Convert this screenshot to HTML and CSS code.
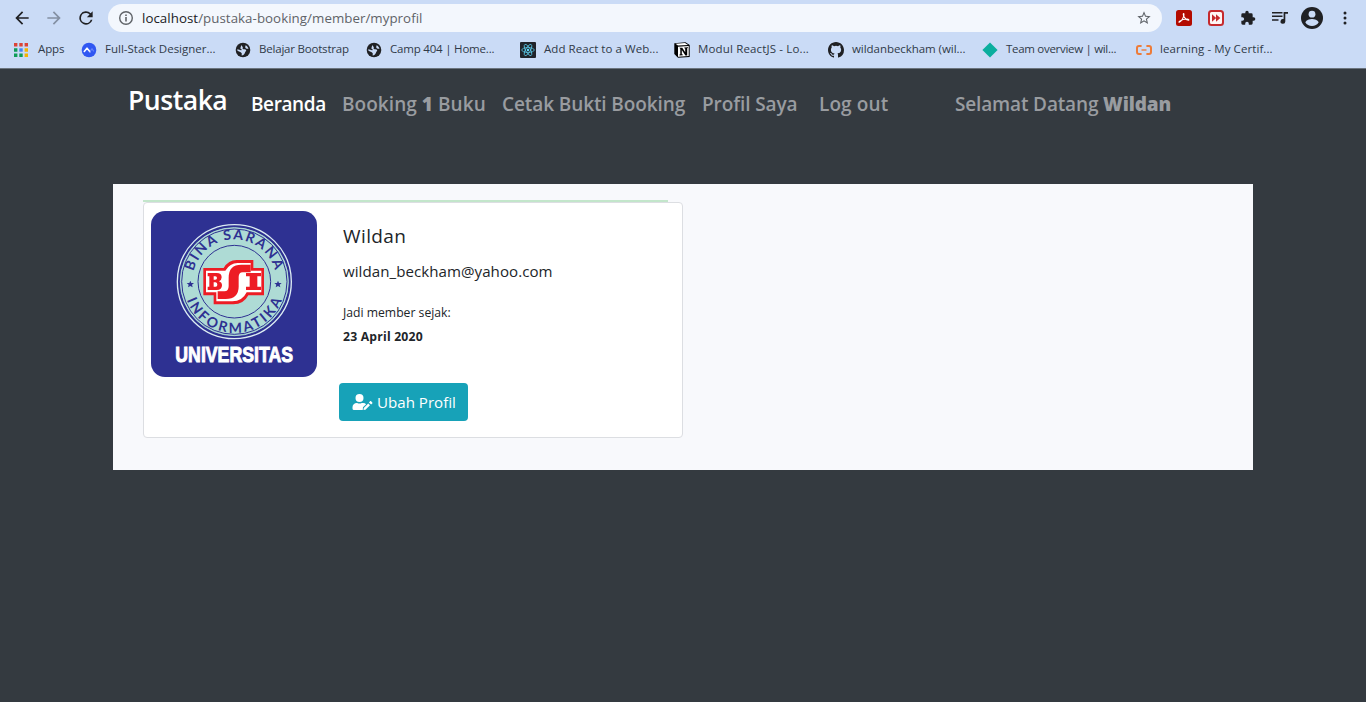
FILE: index.html
```html
<!DOCTYPE html>
<html lang="id">
<head>
<meta charset="utf-8">
<title>Pustaka Booking</title>
<link rel="stylesheet" href="styles.css">
</head>
<body>
<header class="browser">
  <div class="toolbar">
    <svg class="tool back" viewBox="0 0 24 24"><path d="M20 11H7.800l5.600-5.600L12 4l-8 8 8 8 1.400-1.400L7.800 13H20z"/></svg>
    <svg class="tool forward" viewBox="0 0 24 24"><path d="M4 11h12.200l-5.600-5.600L12 4l8 8-8 8-1.400-1.400 5.600-5.600H4z"/></svg>
    <svg class="tool reload" viewBox="0 0 24 24"><path d="M17.650 6.350A8 8 0 1 0 19.730 14h-2.080A6 6 0 1 1 12 6c1.660 0 3.140.690 4.220 1.780L13 11h7V4z"/></svg>
    <div class="address">
      <svg class="info" viewBox="0 0 16 16"><circle cx="8" cy="8" r="6.300" fill="none" stroke="#5f6368" stroke-width="1.400"/><path d="M7.200 7h1.600v4.500H7.200zM7.200 4.400h1.600V6H7.200z"/></svg>
      <span class="url"><span class="host">localhost</span>/pustaka-booking/member/myprofil</span>
      <svg class="star" viewBox="0 0 24 24"><path d="M22 9.240l-7.190-.62L12 2 9.190 8.630 2 9.240l5.460 4.730L5.820 21 12 17.270 18.180 21l-1.630-7.030zM12 15.400l-3.760 2.270 1-4.280-3.320-2.880 4.380-.38L12 6.100l1.710 4.040 4.380.38-3.320 2.880 1 4.280z"/></svg>
    </div>
    <div class="extensions">
      <svg class="ext" viewBox="0 0 16 16"><rect width="16" height="16" rx="2.500" fill="#b30b00"/><path d="M3.200 12.200c1.700-.8 3.700-3.500 4.500-6.100.4-1.300.3-2.600-.1-2.600-.6 0-.3 2.200.8 3.900 1.100 1.800 2.700 2.900 3.900 2.900 1 0 .7-1.300-1.200-1.300-2.600 0-5.800 1-7.400 2.100-.8.6-.9 1.200-.5 1.100z" fill="none" stroke="#fff" stroke-width="1.100"/></svg>
      <svg class="ext" viewBox="0 0 16 16"><rect x="1" y="1" width="14" height="14" rx="2.500" fill="#fff6f4" stroke="#c62a2d" stroke-width="2"/><path d="M4 4.200 8.200 8 4 11.800zM8 4.200 12.300 8 8 11.800z" fill="#c62a2d"/></svg>
      <svg class="ext" viewBox="0 0 24 24"><path d="M20.500 11H19V7a2 2 0 0 0-2-2h-4V3.500a2.500 2.500 0 0 0-5 0V5H4a2 2 0 0 0-2 2v3.800h1.500a2.700 2.700 0 0 1 0 5.400H2V20a2 2 0 0 0 2 2h3.800v-1.500a2.700 2.700 0 0 1 5.400 0V22H17a2 2 0 0 0 2-2v-4h1.500a2.500 2.500 0 0 0 0-5z"/></svg>
      <svg class="ext" viewBox="0 0 16 16"><path d="M0 2h10.500v1.500H0zM0 5.600h10.500v1.500H0zM0 9.200h6.500v1.500H0zM11.600 2H16v1.700h-2.700v7.700a2.400 2.400 0 1 1-1.700-2.300z"/></svg>
      <svg class="avatar" viewBox="0 0 22 22"><circle cx="11" cy="11" r="11"/><circle cx="11" cy="7.200" r="3.400" fill="#cadbf6"/><path d="M4.300 15.200c1.200-2.300 4-3.100 6.700-3.100s5.500.8 6.700 3.100A7.900 7.900 0 0 1 11 19a7.900 7.900 0 0 1-6.700-3.800z" fill="#cadbf6"/></svg>
      <svg class="more" viewBox="0 0 4 14"><circle cx="2" cy="2" r="1.500"/><circle cx="2" cy="7" r="1.500"/><circle cx="2" cy="12" r="1.500"/></svg>
    </div>
  </div>
  <nav class="bookmarks">
    <a class="bookmark bm-apps"><svg viewBox="0 0 16 16"><path fill="#db4437" d="M1 1h3.400v3.400H1zM6.300 1h3.400v3.400H6.300zM11.600 1H15v3.400h-3.400z"/><path fill="#0f9d58" d="M1 6.300h3.400v3.400H1zM1 11.600h3.400V15H1zM6.300 11.600h3.400V15H6.300z"/><path fill="#4285f4" d="M6.300 6.300h3.400v3.400H6.300z"/><path fill="#f4b400" d="M11.600 6.300H15v3.400h-3.400zM11.600 11.600H15V15h-3.400z"/></svg><span>Apps</span></a>
    <a class="bookmark bm-full"><svg viewBox="0 0 16 16"><circle cx="8" cy="8" r="7.300" fill="#3057f2"/><path d="M3.300 9.500 6 6.200l3 3.500" fill="none" stroke="#fff" stroke-width="1.600" stroke-linecap="round" stroke-linejoin="round"/><path d="m9 9.700 2-3 1.800 2.600" fill="none" stroke="#6583fa" stroke-width="1.200"/></svg><span>Full-Stack Designer...</span></a>
    <a class="bookmark bm-belajar"><svg viewBox="0 0 16 16"><circle cx="8" cy="8" r="7.300" fill="#202124"/><path d="M8.800 2.300C6.500 2.300 6 3.700 7.300 4.500c1 .6.200 1.200.3 2 .1 1.100 1.600.8 2.700.9 1.300.2 1 1.500.3 2.200-.7.600-.5 1.700-1.300 2.500-.6.700-1.300 1.500-2.600 1.400-.3-1.100.6-1.700-.2-2.600-.8-1-2.700-.8-4.200-2.300 0-.5 0-1 .1-1.300 1.500.1 2.400 1 3.800.9 1-.3.300-1.200-.6-1.500-.7-.6.300-1.200.2-1.900C6 3.500 7.200 2.100 8.800 2.300zM10.500 3.200c1.600.7 2.600 1.900 3 3.500-1.400.2-3-.2-3.300-1.500-.1-.8.500-1 .3-2z" fill="#cadbf6"/></svg><span>Belajar Bootstrap</span></a>
    <a class="bookmark bm-camp"><svg viewBox="0 0 16 16"><circle cx="8" cy="8" r="7.300" fill="#202124"/><path d="M8.800 2.300C6.500 2.300 6 3.700 7.300 4.500c1 .6.200 1.200.3 2 .1 1.100 1.600.8 2.700.9 1.300.2 1 1.500.3 2.200-.7.600-.5 1.700-1.300 2.500-.6.700-1.300 1.500-2.600 1.400-.3-1.100.6-1.700-.2-2.600-.8-1-2.700-.8-4.200-2.300 0-.5 0-1 .1-1.300 1.500.1 2.400 1 3.800.9 1-.3.300-1.200-.6-1.500-.7-.6.300-1.200.2-1.900C6 3.500 7.200 2.100 8.800 2.300zM10.500 3.200c1.600.7 2.600 1.900 3 3.500-1.400.2-3-.2-3.300-1.500-.1-.8.500-1 .3-2z" fill="#cadbf6"/></svg><span>Camp 404 | Home...</span></a>
    <a class="bookmark bm-react"><svg viewBox="0 0 16 16"><rect width="16" height="16" rx="1" fill="#20232a"/><g fill="none" stroke="#61dafb" stroke-width=".7"><ellipse cx="8" cy="8" rx="6.300" ry="2.400"/><ellipse cx="8" cy="8" rx="6.300" ry="2.400" transform="rotate(60 8 8)"/><ellipse cx="8" cy="8" rx="6.300" ry="2.400" transform="rotate(120 8 8)"/></g><circle cx="8" cy="8" r="1.200" fill="#61dafb"/></svg><span>Add React to a Web...</span></a>
    <a class="bookmark bm-modul"><svg viewBox="0 0 16 16"><path d="M.3 1.200 11.500.3 15.700 3v12L4 15.800.3 12z" fill="#000"/><path d="M1.500 1.800 11 1.100l3 1.800L4 3.600zM4 4.700l10.700-.7v10L4 14.800z" fill="#fff"/><path d="M5.300 5.800h3l2.900 4.400V6.500l-.9-.2v-.7L14 5.300v.7l-.8.300v7.100l-1.800.2-3.600-5.500v4.200l1 .2v.7l-3.300.2v-.8l.8-.3V6.700z"/></svg><span>Modul ReactJS - Lo...</span></a>
    <a class="bookmark bm-github"><svg viewBox="0 0 16 16"><path fill="#202124" d="M8 0C3.580 0 0 3.580 0 8c0 3.540 2.290 6.530 5.470 7.590.4.070.55-.17.55-.38 0-.19-.01-.82-.01-1.490-2.010.37-2.530-.49-2.690-.94-.09-.23-.48-.94-.82-1.130-.28-.15-.68-.52-.01-.53.63-.01 1.080.58 1.230.82.72 1.210 1.870.87 2.330.66.07-.52.28-.87.51-1.070-1.780-.2-3.640-.89-3.640-3.950 0-.87.31-1.590.82-2.150-.08-.2-.36-1.020.08-2.120 0 0 .67-.21 2.200.82a7.600 7.600 0 0 1 4 0c1.530-1.040 2.200-.82 2.200-.82.44 1.100.16 1.920.08 2.120.51.56.82 1.270.82 2.150 0 3.070-1.870 3.750-3.650 3.950.29.25.54.73.54 1.480 0 1.070-.01 1.930-.01 2.200 0 .21.15.46.55.38A8 8 0 0 0 16 8c0-4.420-3.580-8-8-8z"/></svg><span>wildanbeckham (wil...</span></a>
    <a class="bookmark bm-team"><svg viewBox="0 0 16 16"><path d="m8 .4 7.600 7.600L8 15.600.4 8z" fill="#0bae9e"/></svg><span>Team overview | wil...</span></a>
    <a class="bookmark bm-learning"><svg viewBox="0 0 16 16"><path d="M5.600 4H3Q1 4 1 6v4q0 2 2 2h2.600M10.400 4H13q2 0 2 2v4q0 2-2 2h-2.600" fill="none" stroke="#ed7b38" stroke-width="2"/><path d="M5.500 8h5" stroke="#ed7b38" stroke-width="1.400"/></svg><span>learning - My Certif...</span></a>
  </nav>
</header>
<nav class="navbar">
  <a class="brand">Pustaka</a>
  <a class="link active w-home">Beranda</a>
  <a class="link w-book">Booking <b>1</b> Buku</a>
  <a class="link w-print">Cetak Bukti Booking</a>
  <a class="link w-profile">Profil Saya</a>
  <a class="link w-logout">Log out</a>
  <span class="link w-hello">Selamat Datang <b>Wildan</b></span>
</nav>
<main class="content">
  <div class="accent"></div>
  <section class="card">
    <svg class="logo" viewBox="32 48 498 498">
      <defs>
        <path id="arc-top" d="M159 232A126 126 0 0 1 405 232"/>
        <path id="arc-bottom" d="M138 312A153 153 0 0 0 426 312"/>
      </defs>
      <rect x="32" y="48" width="498" height="498" rx="42" fill="#2e3192"/>
      <circle cx="282" cy="260" r="171" fill="#2e3192" stroke="#dcecf3" stroke-width="4"/>
      <circle cx="282" cy="260" r="162" fill="#aedbd5" stroke="#aedbd5" stroke-width="3"/>
      <circle cx="282" cy="260" r="158" fill="none" stroke="#2e3192" stroke-width="3"/>
      <circle cx="282" cy="260" r="109" fill="none" stroke="#2e3192" stroke-width="3"/>
      <text class="ring-text"><textPath href="#arc-top" startOffset="3" textLength="331" lengthAdjust="spacing">BINA SARANA</textPath></text>
      <text class="ring-text"><textPath href="#arc-bottom" startOffset="3" textLength="368" lengthAdjust="spacing">INFORMATIKA</textPath></text>
      <path fill="#2e3192" d="m150 257 3 7h8l-6 5 2 8-7-4-7 4 2-8-6-5h8zM413 257l3 7h8l-6 5 2 8-7-4-7 4 2-8-6-5h8z"/>
      <path d="M189 219h61q14-24 39-24h50v24h32v82h-47q-14 27-45 27h-59v-27h-31z" fill="#ed1c24"/>
      <path d="M197 227h58q14-23 37-23h39v23h32v65h-44q-13 27-43 27h-48v-27h-31z" fill="#fff"/>
      <path fill="#ed1c24" fill-rule="evenodd" d="M202 234h27q15 0 15 13 0 9-8 12 9 3 9 12 0 14-16 14h-27v-10h5v-31h-5zm18 10v10h5q5 0 5-5t-5-5zm0 18v13h6q5 0 5-6t-5-7zM331 209h-28q-38 0-38 39v25q0 16-13 16h-20v23h24q41 0 39-42v-24q0-14 12-14h24zM317 234h45v10h-11v31h11v10h-45v-10h11v-31h-11z"/>
      <text class="uni-text" x="105" y="500" textLength="353" lengthAdjust="spacingAndGlyphs">UNIVERSITAS</text>
    </svg>
    <div class="details">
      <h5 class="name">Wildan</h5>
      <p class="email">wildan_beckham@yahoo.com</p>
      <p class="since">Jadi member sejak:<br><b>23 April 2020</b></p>
      <a class="button"><svg viewBox="0 0 640 512"><path d="M224 256A128 128 0 1 0 224 0a128 128 0 0 0 0 256zm90 32h-17a174 174 0 0 1-146 0h-17A134 134 0 0 0 0 422v42a48 48 0 0 0 48 48h280l7-87 101-101a134 134 0 0 0-122-36zM360 449l-8 63 63-8 144-144-55-55zM633 268l-37-37c-9-9-24-9-34 0l-36 37 69 69 38-36c9-9 9-24 0-33z"/></svg><span>Ubah Profil</span></a>
    </div>
  </section>
</main>
</body>
</html>
```
FILE: styles.css
```css
* { box-sizing: border-box; }
body { margin: 0; height: 702px; overflow: hidden; background: #343a40; color: #212529; font-family: "Open Sans", "Noto Sans", sans-serif; }
svg { display: block; flex: none; }
.browser { height: 69px; background: #cadbf6; border-bottom: 1px solid #6b747e; }
.toolbar { display: flex; align-items: center; height: 36px; padding-left: 12px; fill: #202124; }
.tool { width: 20px; height: 20px; margin-right: 12px; }
.forward { fill: #8490a3; }
.address { display: flex; align-items: center; width: 1054px; height: 28px; border-radius: 14px; padding: 0 10px; background: #f3f7fd; fill: #5f6368; }
.info { width: 16px; height: 16px; margin-right: 8px; }
.url { flex: 1; font-size: 13.3px; letter-spacing: .05px; color: #5f6368; white-space: nowrap; }
.host { color: #202124; }
.star { width: 16px; height: 16px; }
.extensions { display: flex; align-items: center; margin-left: 14px; }
.ext { width: 16px; height: 16px; margin-right: 16px; }
.avatar { width: 22px; height: 22px; margin-left: -3px; }
.more { width: 4px; height: 14px; margin-left: 20px; }
.bookmarks { display: flex; align-items: center; height: 28px; padding-left: 13px; }
.bookmark { display: flex; align-items: center; gap: 8px; flex: none; font-size: 11.5px; line-height: 16px; color: #303a48; white-space: nowrap; letter-spacing: -.1px; }
.bookmark svg { width: 16px; height: 16px; }
.bookmark span { margin-top: -2px; }
.bm-apps { width: 68px; gap: 9px; }
.bm-full { width: 154px; letter-spacing: 0; }
.bm-belajar { width: 131px; letter-spacing: -.2px; }
.bm-camp { width: 154px; letter-spacing: -.2px; }
.bm-react { width: 154px; letter-spacing: .05px; }
.bm-modul { width: 154px; letter-spacing: .15px; }
.bm-github { width: 154px; letter-spacing: -.05px; }
.bm-team { width: 154px; letter-spacing: -.3px; }
.bm-learning { width: 154px; letter-spacing: .08px; }
.navbar { display: flex; align-items: baseline; height: 115px; padding: 10px 0 0 128px; white-space: nowrap; }
.brand { width: 123px; font-size: 26.6px; font-weight: 600; line-height: 42px; color: #fff; letter-spacing: -.5px; }
.link { flex: none; position: relative; top: 1px; font-size: 19px; font-weight: 600; line-height: 30px; color: #999ca0; letter-spacing: -.1px; }
.active { color: #fff; }
.w-home { width: 91px; letter-spacing: -.4px; }
.w-book { width: 160px; letter-spacing: .05px; }
.w-print { width: 200px; }
.w-profile { width: 117px; }
.w-logout { width: 136px; letter-spacing: .1px; }
.w-hello { letter-spacing: -.15px; }
.content { width: 1140px; height: 286px; margin: 0 auto; padding: 16px 30px; background: #f8f9fc; }
.accent { width: 525px; height: 2px; background: #c3e6cb; }
.card { display: flex; width: 540px; height: 236px; border: 1px solid #dcdee2; border-radius: 4px; background: #fff; }
.logo { width: 166px; height: 166px; margin: 8px 0 0 7px; }
.ring-text { font: 700 42px "Lato", sans-serif; fill: #2e3192; }
.uni-text { font: 700 68px "Liberation Sans", Arial, sans-serif; fill: #fff; stroke: #fff; stroke-width: 3px; }
.details { padding: 21px 0 0 26px; }
.name { margin: 0 0 11px; font-size: 19px; font-weight: 500; line-height: 24px; letter-spacing: .4px; }
.email { margin: 0 0 18px; font-size: 15.1px; line-height: 24px; letter-spacing: .05px; }
.since { margin: 0; font-size: 12.2px; line-height: 24px; white-space: nowrap; }
.since b { letter-spacing: .2px; }
.button { display: flex; align-items: center; width: 129px; height: 38px; margin: 34px 0 0 -4px; padding-left: 13px; gap: 4px; border-radius: 4px; background: #17a2b8; color: #fff; fill: #fff; font-size: 15.1px; white-space: nowrap; }
.button svg { width: 21px; height: 16px; }
```
